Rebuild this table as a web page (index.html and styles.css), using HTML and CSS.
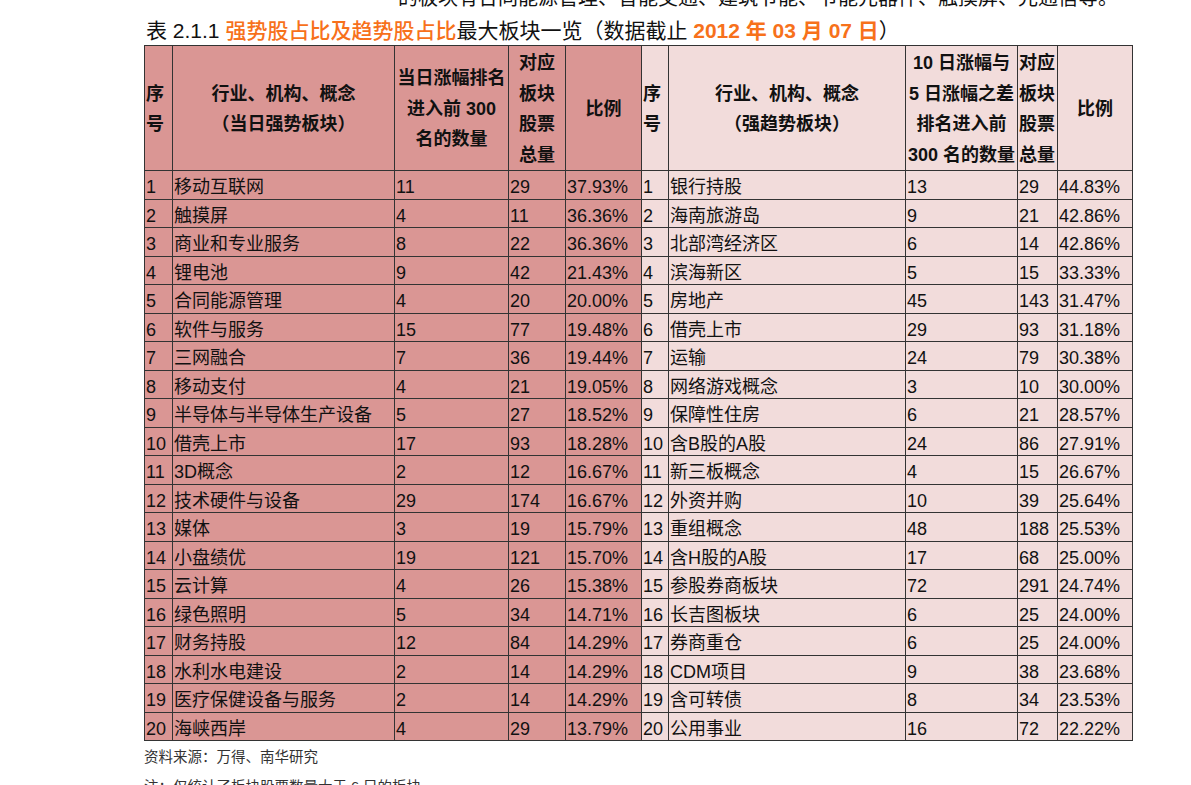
FILE: index.html
```html
<!DOCTYPE html>
<html lang="zh-CN">
<head>
<meta charset="utf-8">
<title>表 2.1.1</title>
<link rel="stylesheet" href="styles.css">
</head>
<body>
<div class="page">
  <p class="lead">的板块有合同能源管理、智能交通、建筑节能、节能元器件、触摸屏、光通信等。</p>
  <h1 class="title">表 2.1.1 <span class="hl">强势股占比及趋势股占比</span>最大板块一览（数据截止 <span class="hl b">2012 年 03 月 07 日</span>）</h1>
  <table class="grid">
    <colgroup>
      <col class="c1"><col class="c2"><col class="c3"><col class="c4"><col class="c5">
      <col class="c6"><col class="c7"><col class="c8"><col class="c9"><col class="c10">
    </colgroup>
    <thead>
      <tr class="head">
        <th class="left">序<br>号</th>
        <th>行业、机构、概念<br>（当日强势板块）</th>
        <th>当日涨幅排名<br>进入前 300<br>名的数量</th>
        <th>对应<br>板块<br>股票<br>总量</th>
        <th>比例</th>
        <th class="left">序<br>号</th>
        <th>行业、机构、概念<br>（强趋势板块）</th>
        <th>10 日涨幅与<br>5 日涨幅之差<br>排名进入前<br>300 名的数量</th>
        <th class="left">对应<br>板块<br>股票<br>总量</th>
        <th>比例</th>
      </tr>
    </thead>
    <tbody>
      <tr><td>1</td><td>移动互联网</td><td>11</td><td>29</td><td>37.93%</td><td>1</td><td>银行持股</td><td>13</td><td>29</td><td>44.83%</td></tr>
      <tr><td>2</td><td>触摸屏</td><td>4</td><td>11</td><td>36.36%</td><td>2</td><td>海南旅游岛</td><td>9</td><td>21</td><td>42.86%</td></tr>
      <tr><td>3</td><td>商业和专业服务</td><td>8</td><td>22</td><td>36.36%</td><td>3</td><td>北部湾经济区</td><td>6</td><td>14</td><td>42.86%</td></tr>
      <tr><td>4</td><td>锂电池</td><td>9</td><td>42</td><td>21.43%</td><td>4</td><td>滨海新区</td><td>5</td><td>15</td><td>33.33%</td></tr>
      <tr><td>5</td><td>合同能源管理</td><td>4</td><td>20</td><td>20.00%</td><td>5</td><td>房地产</td><td>45</td><td>143</td><td>31.47%</td></tr>
      <tr><td>6</td><td>软件与服务</td><td>15</td><td>77</td><td>19.48%</td><td>6</td><td>借壳上市</td><td>29</td><td>93</td><td>31.18%</td></tr>
      <tr><td>7</td><td>三网融合</td><td>7</td><td>36</td><td>19.44%</td><td>7</td><td>运输</td><td>24</td><td>79</td><td>30.38%</td></tr>
      <tr><td>8</td><td>移动支付</td><td>4</td><td>21</td><td>19.05%</td><td>8</td><td>网络游戏概念</td><td>3</td><td>10</td><td>30.00%</td></tr>
      <tr><td>9</td><td>半导体与半导体生产设备</td><td>5</td><td>27</td><td>18.52%</td><td>9</td><td>保障性住房</td><td>6</td><td>21</td><td>28.57%</td></tr>
      <tr><td>10</td><td>借壳上市</td><td>17</td><td>93</td><td>18.28%</td><td>10</td><td>含B股的A股</td><td>24</td><td>86</td><td>27.91%</td></tr>
      <tr><td>11</td><td>3D概念</td><td>2</td><td>12</td><td>16.67%</td><td>11</td><td>新三板概念</td><td>4</td><td>15</td><td>26.67%</td></tr>
      <tr><td>12</td><td>技术硬件与设备</td><td>29</td><td>174</td><td>16.67%</td><td>12</td><td>外资并购</td><td>10</td><td>39</td><td>25.64%</td></tr>
      <tr><td>13</td><td>媒体</td><td>3</td><td>19</td><td>15.79%</td><td>13</td><td>重组概念</td><td>48</td><td>188</td><td>25.53%</td></tr>
      <tr><td>14</td><td>小盘绩优</td><td>19</td><td>121</td><td>15.70%</td><td>14</td><td>含H股的A股</td><td>17</td><td>68</td><td>25.00%</td></tr>
      <tr><td>15</td><td>云计算</td><td>4</td><td>26</td><td>15.38%</td><td>15</td><td>参股券商板块</td><td>72</td><td>291</td><td>24.74%</td></tr>
      <tr><td>16</td><td>绿色照明</td><td>5</td><td>34</td><td>14.71%</td><td>16</td><td>长吉图板块</td><td>6</td><td>25</td><td>24.00%</td></tr>
      <tr><td>17</td><td>财务持股</td><td>12</td><td>84</td><td>14.29%</td><td>17</td><td>券商重仓</td><td>6</td><td>25</td><td>24.00%</td></tr>
      <tr><td>18</td><td>水利水电建设</td><td>2</td><td>14</td><td>14.29%</td><td>18</td><td>CDM项目</td><td>9</td><td>38</td><td>23.68%</td></tr>
      <tr><td>19</td><td>医疗保健设备与服务</td><td>2</td><td>14</td><td>14.29%</td><td>19</td><td>含可转债</td><td>8</td><td>34</td><td>23.53%</td></tr>
      <tr><td>20</td><td>海峡西岸</td><td>4</td><td>29</td><td>13.79%</td><td>20</td><td>公用事业</td><td>16</td><td>72</td><td>22.22%</td></tr>
    </tbody>
  </table>
  <p class="source">资料来源：万得、南华研究</p>
  <p class="note">注：仅统计了板块股票数量大于 6 只的板块</p>
</div>
</body>
</html>
```

FILE: styles.css
```css
html, body {
  margin: 0;
  padding: 0;
  background: #ffffff;
}

body {
  font-family: "Liberation Sans", "Noto Sans CJK SC", sans-serif;
  color: #111111;
  overflow: hidden;
  height: 785px;
}

.page {
  padding-left: 144px;
  display: flex;
  flex-direction: column;
  align-items: flex-start;
}

.lead {
  margin: -14px 0 0 0;
  padding-left: 254px;
  font-size: 20px;
  line-height: 24px;
  white-space: nowrap;
  color: #111;
}

.title {
  margin: 9px 0 0 2px;
  font-size: 21px;
  line-height: 24px;
  font-weight: normal;
  white-space: nowrap;
  color: #111;
}

.title .hl {
  color: #f7711b;
  font-weight: 500;
}

.title .hl.b {
  font-weight: bold;
}

.grid {
  margin-top: 2px;
  border-collapse: collapse;
  table-layout: fixed;
  width: 989px;
  font-size: 18px;
}

.c1 { width: 28px; }
.c2 { width: 222px; }
.c3 { width: 114px; }
.c4 { width: 57px; }
.c5 { width: 76px; }
.c6 { width: 27px; }
.c7 { width: 237px; }
.c8 { width: 112px; }
.c9 { width: 40px; }
.c10 { width: 75px; }

.grid th,
.grid td {
  border: 1px solid #333333;
  padding: 0 0 0 1px;
  overflow: hidden;
  white-space: nowrap;
}

.grid th:nth-child(-n+5),
.grid td:nth-child(-n+5) {
  background: #da9694;
}

.grid th:nth-child(n+6),
.grid td:nth-child(n+6) {
  background: #f2dcdb;
}

.grid thead tr {
  height: 124px;
}

.grid th {
  font-weight: bold;
  line-height: 30.5px;
  text-align: center;
  vertical-align: middle;
  padding: 2px 0 0 0;
}

.grid th.left {
  text-align: left;
  padding-left: 1px;
}

.grid tbody tr {
  height: 28.5px;
}

.grid td {
  line-height: 22px;
  text-align: left;
  vertical-align: middle;
  padding-top: 5px;
  padding-bottom: 0;
}

.source {
  margin: 6px 0 0 0;
  font-size: 14.5px;
  line-height: 20px;
  color: #333;
}

.note {
  margin: 10px 0 0 0;
  font-size: 14.5px;
  line-height: 20px;
  color: #333;
}
```
